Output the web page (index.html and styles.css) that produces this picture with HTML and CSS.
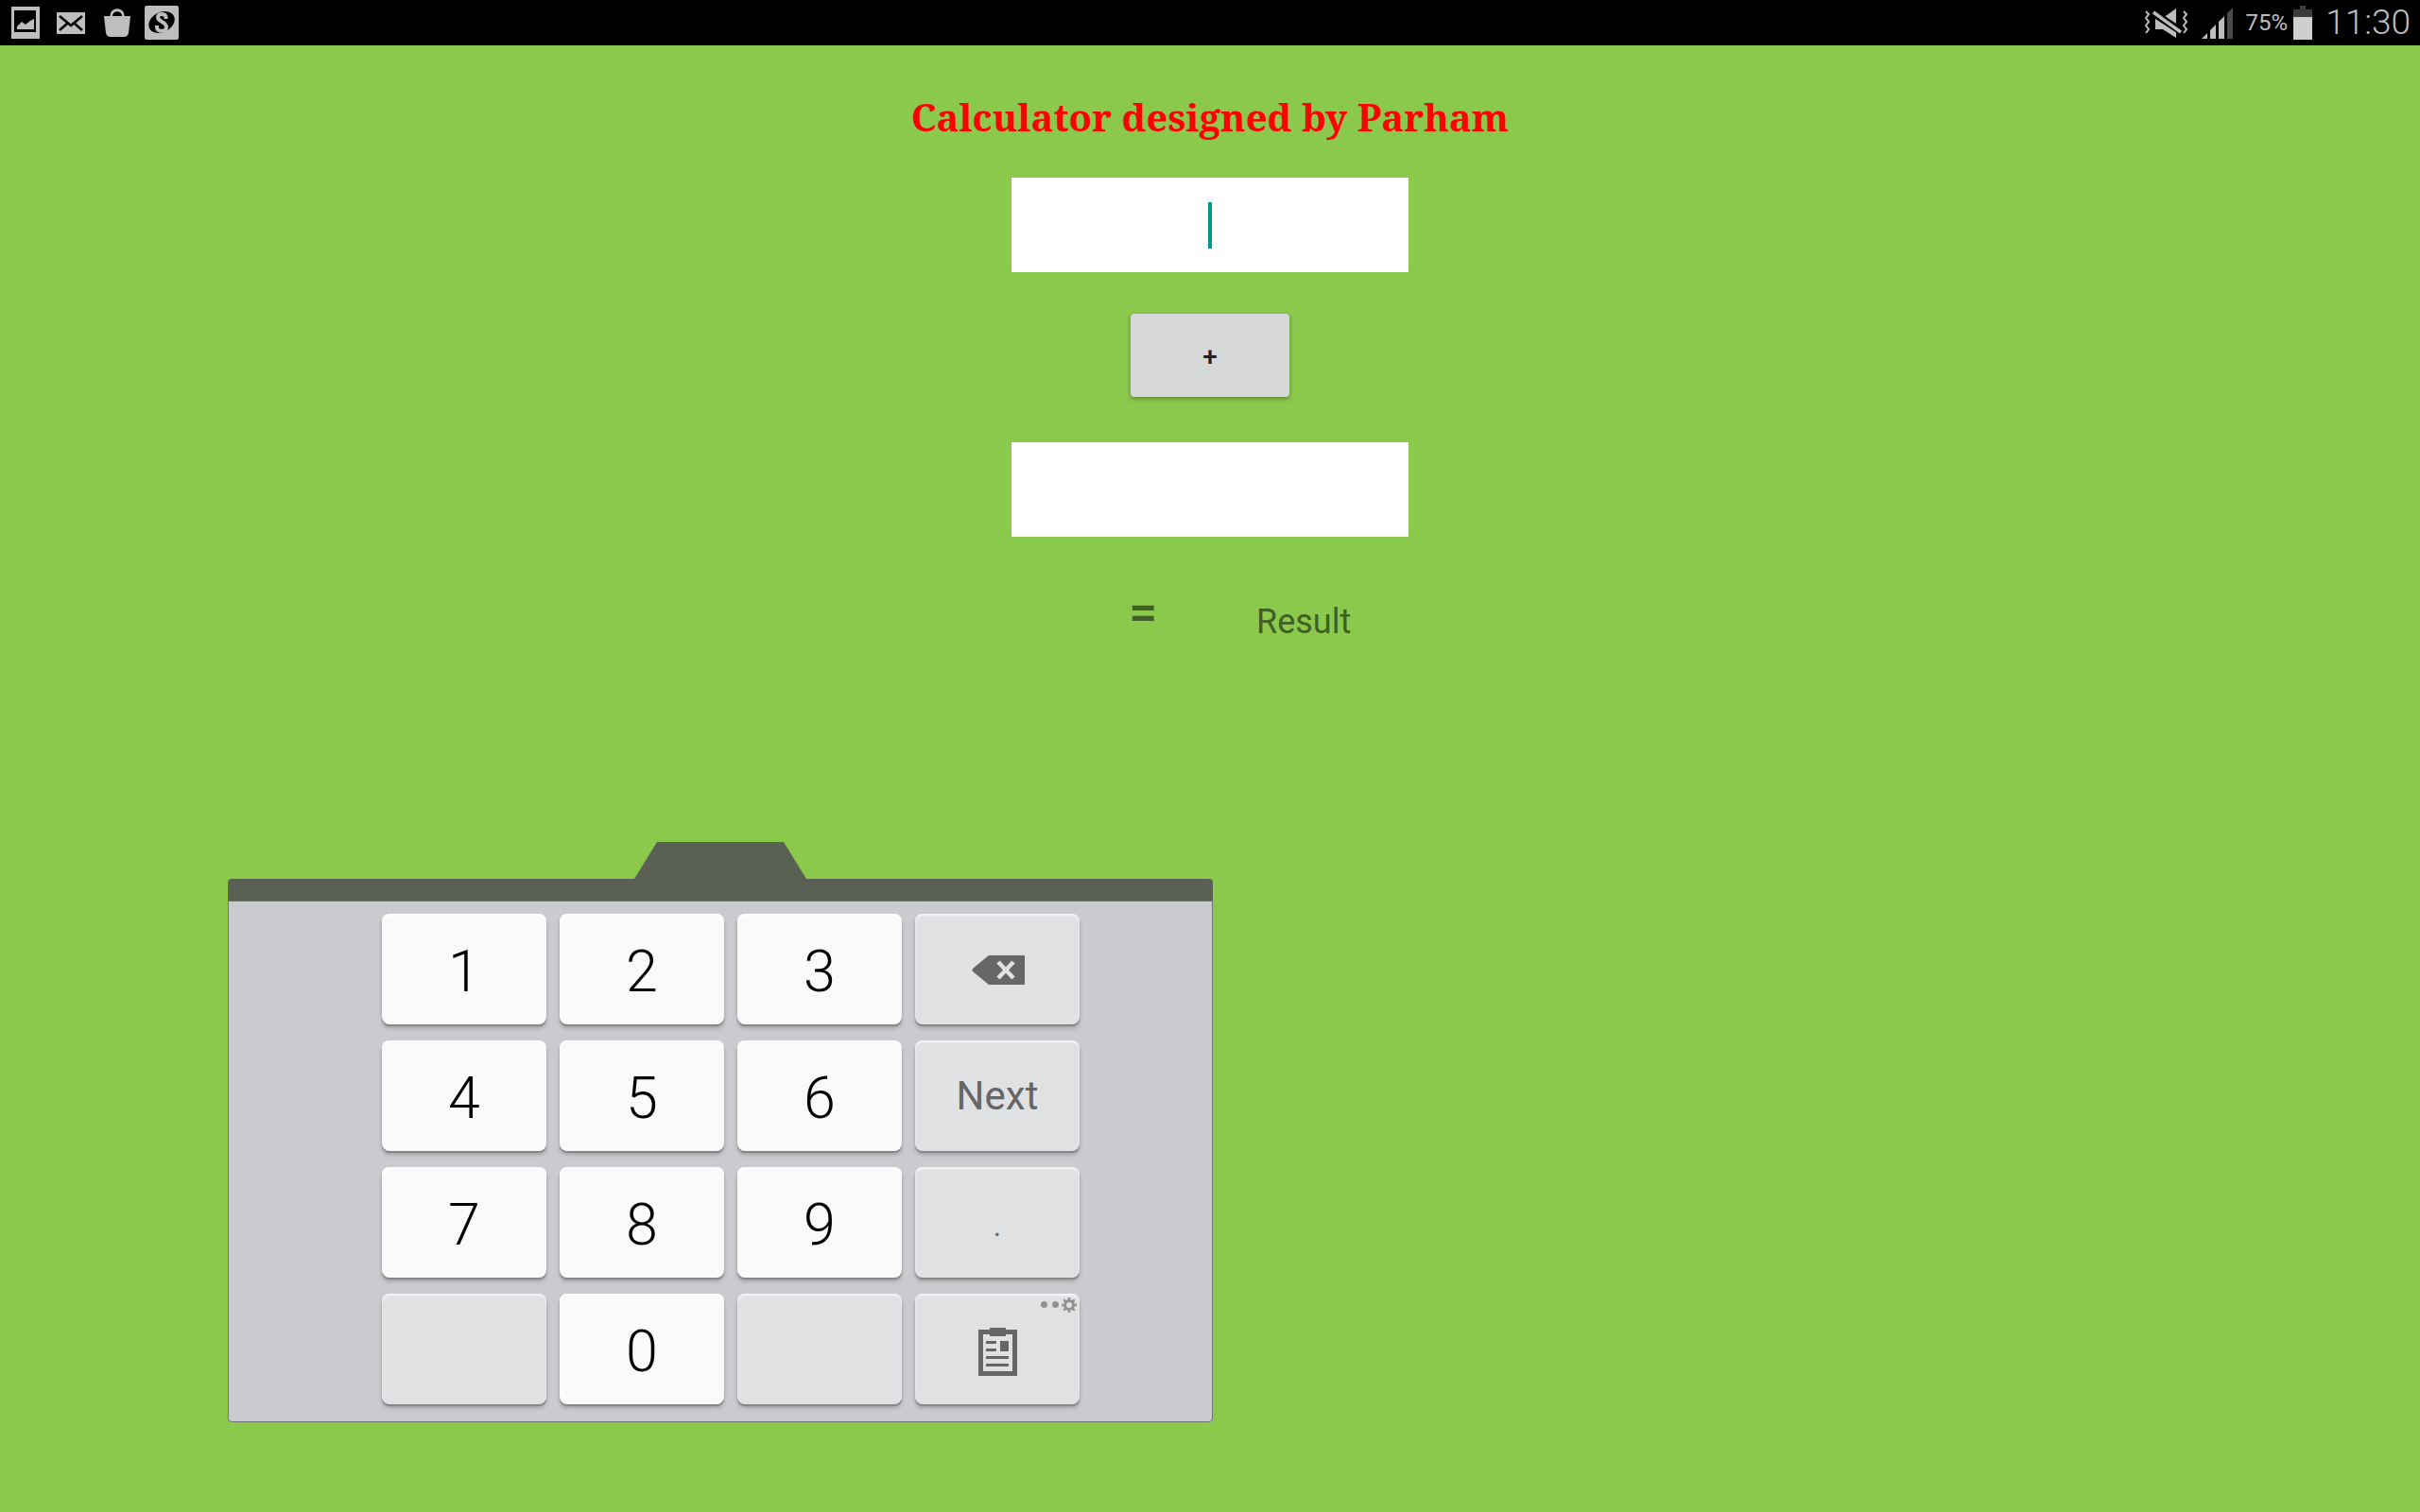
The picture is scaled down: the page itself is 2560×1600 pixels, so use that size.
FILE: index.html
```html
<!DOCTYPE html>
<html lang="en">
<head>
<meta charset="utf-8">
<meta name="viewport" content="width=device-width, initial-scale=1">
<title>Calculator</title>
<link rel="stylesheet" href="styles.css">
</head>
<body>
<header class="status">
  <div class="status-left">
    <svg width="30" height="34" viewBox="0 0 30 34" aria-hidden="true">
      <path fill="#bebebe" fill-rule="evenodd" d="M0 0h30v34H0zM3 4v23h23V4z"/>
      <path fill="#bebebe" d="M6 24v-3l5-5 4 3 5-4 4-2v11z"/>
    </svg>
    <svg class="mail" width="30" height="23" viewBox="0 0 30 23" aria-hidden="true">
      <path fill="#bebebe" d="M0 0h30v23H0z"/>
      <path fill="none" stroke="#000" stroke-width="2.6" d="M3 4l12 10L27 4M3 19l8-7M27 19l-8-7"/>
    </svg>
    <svg class="bag" width="28" height="30" viewBox="0 0 28 30" aria-hidden="true">
      <path fill="none" stroke="#bebebe" stroke-width="3" d="M8 10V7c0-7 12-7 12 0v3"/>
      <path fill="#bebebe" d="M0 8h28l-2 18q-1 4-5 4H7q-4 0-5-4z"/>
      <path fill="#000" d="M9 8c0-5 10-5 10 0z"/>
    </svg>
    <svg class="coin" width="36" height="36" viewBox="0 0 36 36" aria-hidden="true">
      <rect width="36" height="36" rx="2" fill="#bebebe"/>
      <ellipse cx="18" cy="17.500" rx="14.500" ry="10.500" transform="rotate(-28 18 17.500)" fill="#000"/>
      <path fill="none" stroke="#bebebe" stroke-width="4" d="M22.500 14v-2c0-4-8.500-4-8.500 0 0 6 9 4 9 11 0 5-10 5-10 0v-2"/>
    </svg>
  </div>
  <div class="status-right">
    <svg width="46" height="31" viewBox="0 0 46 31" aria-hidden="true">
      <path fill="#bebebe" d="M11 10h8L33 0v31L19 22h-8z"/>
      <path stroke="#000" stroke-width="8" d="M8 4l30 20"/>
      <path stroke="#bebebe" stroke-width="3.500" d="M9 4l29 21"/>
      <path fill="none" stroke="#bebebe" stroke-width="2" d="M1 3l3 3-3 4 3 4-3 4 3 4-3 4M41 3l3 3-3 4 3 4-3 4 3 4-3 4"/>
    </svg>
    <svg width="33" height="33" viewBox="0 0 33 33" aria-hidden="true">
      <path fill="#bebebe" d="M0 33l6-6v6zM9 33V24l6-6v15zM18 33V15l6-6v24z"/>
      <path fill="#4a4a4a" d="M27 33V6l6-6v33z"/>
    </svg>
    <span class="percent">75%</span>
    <svg class="battery" width="20" height="36" viewBox="0 0 20 36" aria-hidden="true">
      <path fill="#3c3c3c" d="M0 4h7V0h6v4h7v8H0z"/>
      <path fill="#cecece" d="M0 12h20v24H0z"/>
    </svg>
    <time class="clock">11:30</time>
  </div>
</header>
<main>
  <form class="calc">
    <h1>Calculator designed by Parham</h1>
    <input class="number active" type="text" inputmode="numeric" aria-label="First number">
    <button class="operator" type="button">+</button>
    <input class="number" type="text" inputmode="numeric" aria-label="Second number">
    <div class="answer"><span class="equals">=</span><output>Result</output></div>
  </form>
  <section class="keyboard" aria-label="Keyboard">
    <div class="handle"></div>
    <div class="bar"></div>
    <div class="keys">
      <button class="key">1</button>
      <button class="key">2</button>
      <button class="key">3</button>
      <button class="key fn icon" aria-label="Delete">
        <svg width="56" height="31" viewBox="0 0 56 31" aria-hidden="true">
          <path fill="#666" d="M18 0h37q1 0 1 1v29q0 1-1 1H18L1 17q-1-1.500 0-3z"/>
          <path stroke="#e0e1e3" stroke-width="4.500" d="M28 7l16 17M44 7L28 24"/>
        </svg>
      </button>
      <button class="key">4</button>
      <button class="key">5</button>
      <button class="key">6</button>
      <button class="key fn">Next</button>
      <button class="key">7</button>
      <button class="key">8</button>
      <button class="key">9</button>
      <button class="key fn dot">.</button>
      <button class="key fn" aria-label="Blank"></button>
      <button class="key">0</button>
      <button class="key fn" aria-label="Blank"></button>
      <button class="key fn clipboard" aria-label="Clipboard">
        <svg width="41" height="51" viewBox="0 0 41 51" aria-hidden="true">
          <path fill="#666" fill-rule="evenodd" d="M0 2h12V0h17v2h12v49H0zM5 7v39h31V7h-7v2H12V7z"/>
          <path fill="#666" d="M8 14h11v3H8zM8 22h11v3H8zM23 14h9v11h-9zM8 30h24v3H8zM8 38h24v3H8z"/>
        </svg>
        <svg class="more" width="38" height="16" viewBox="0 0 38 16" aria-hidden="true">
          <circle cx="3.500" cy="7.500" r="3.500" fill="#929292"/>
          <circle cx="15.500" cy="7.500" r="3.500" fill="#929292"/>
          <g fill="none" stroke="#929292">
            <circle cx="30" cy="8" r="4.500" stroke-width="3"/>
            <path stroke-width="2.500" d="M30 0v3M30 13v3M22 8h3M35 8h3M24.300 2.300l2.200 2.200M33.500 11.500l2.200 2.200M35.700 2.300l-2.200 2.200M26.500 11.500l-2.200 2.200"/>
          </g>
        </svg>
      </button>
    </div>
  </section>
</main>
</body>
</html>
```
FILE: styles.css
```css
* { box-sizing: border-box; }

body {
  margin: 0;
  min-height: 100vh;
  background: #8bc94d;
  font-family: Roboto, "Liberation Sans", sans-serif;
}

svg { display: block; flex: none; }

/* Status bar */
.status {
  display: flex;
  justify-content: space-between;
  height: 48px;
  padding: 0 10px 0 12px;
  background: #000;
  color: #bebebe;
}
.status-left, .status-right { display: flex; align-items: center; }
.status-left { gap: 18px; }
.bag { margin-left: 2px; }
.coin { margin-left: -3px; }
.status-right { gap: 14px; }
.percent { font-size: 24px; line-height: 50px; margin-right: -8px; }
.clock { font-size: 37px; font-weight: 300; line-height: 56px; }

/* Calculator form */
.calc {
  display: flex;
  flex-direction: column;
  align-items: center;
}
h1 {
  margin: 48px 0 36px;
  color: #f00;
  font: bold 40px/56px "Droid Serif", "Noto Serif", "Liberation Serif", serif;
}
.number {
  width: 420px;
  height: 100px;
  padding: 0 16px;
  border: 0;
  border-radius: 0;
  background: #fff;
  font: 36px Roboto, sans-serif;
  text-align: center;
}
.number.active {
  background: linear-gradient(#009688, #009688) center / 4px 49px no-repeat #fff;
}
.operator {
  width: 168px;
  height: 88px;
  margin: 44px 0 48px;
  padding: 2px 0 0;
  border: 0;
  border-radius: 4px;
  background: #d6d8d7;
  box-shadow: 0 2px 5px rgba(0, 0, 0, .35);
  color: #212121;
  font: 500 28px Roboto, sans-serif;
}
.answer {
  display: grid;
  grid-template-columns: 135px 1fr;
  width: 420px;
  margin-top: 56px;
  padding-left: 124px;
  color: #415f24;
}
.equals { font-size: 54px; font-weight: 500; line-height: 48px; }
output { font-size: 36px; line-height: 68px; }

/* Floating keyboard */
.keyboard {
  width: 1042px;
  max-width: 100%;
  margin: 199px 0 0 241px;
}
.handle {
  width: 182px;
  height: 39px;
  margin: 0 auto;
  background: #5b6054;
  clip-path: polygon(24px 0, 158px 0, 100% 100%, 0 100%);
}
.bar {
  height: 23px;
  border-radius: 4px 4px 0 0;
  background: #5b6054;
}
.keys {
  display: grid;
  grid-template-columns: repeat(4, 1fr);
  gap: 17px 14px;
  padding: 13px 140px 18px 162px;
  border: 1px solid #747578;
  border-radius: 0 0 4px 4px;
  background: #cacbcf;
}
.key {
  position: relative;
  display: flex;
  align-items: center;
  justify-content: center;
  height: 117px;
  padding: 4px 0 0;
  border: 0;
  border-radius: 8px;
  background: #fafafa;
  box-shadow: 0 2px 1px #858588, 0 4px 4px rgba(0, 0, 0, .2), inset 0 2px 1px #fff;
  color: #000;
  font: 300 61px Roboto, sans-serif;
}
.fn {
  padding: 0;
  background: #e0e1e3;
  box-shadow: 0 2px 1px #858588, 0 4px 4px rgba(0, 0, 0, .2), inset 0 2px 2px #f6f6f7;
  color: #666;
  font-size: 42px;
  font-weight: 400;
}
.icon { padding: 2px 0 0 2px; }
.clipboard { padding: 6px 0 0 1px; }
.dot { font-weight: 300; }
.more { position: absolute; top: 4px; right: 3px; }
```
